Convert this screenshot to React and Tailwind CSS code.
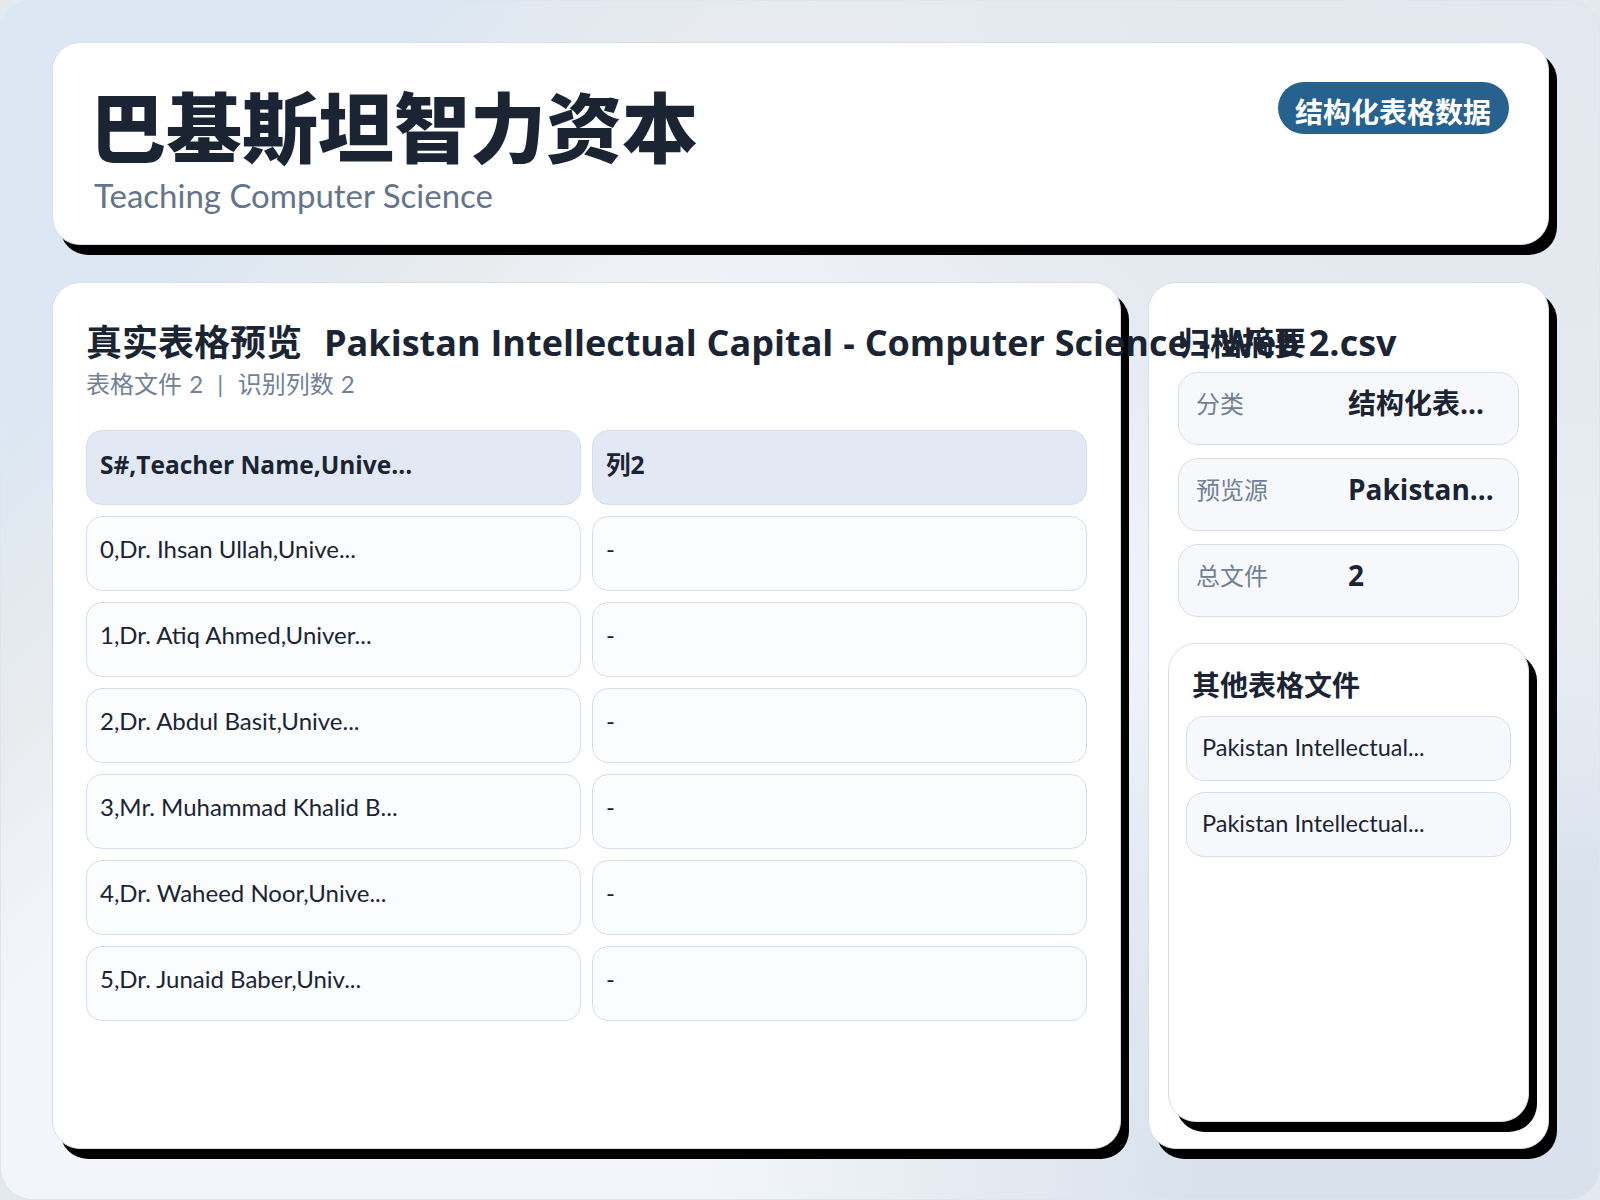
const ROWS = [
  '0,Dr. Ihsan Ullah,Unive...',
  '1,Dr. Atiq Ahmed,Univer...',
  '2,Dr. Abdul Basit,Unive...',
  '3,Mr. Muhammad Khalid B...',
  '4,Dr. Waheed Noor,Unive...',
  '5,Dr. Junaid Baber,Univ...',
]

const SUMMARY = [
  { label: '分类', value: '结构化表...' },
  { label: '预览源', value: 'Pakistan...' },
  { label: '总文件', value: '2' },
]

const BOLD = "font-['Open_Sans','Noto_Sans_CJK_SC',sans-serif] font-bold"

function Cell({ children, head }) {
  return (
    <div
      className={`h-[75px] rounded-[16px] border border-[#d6deea] pl-[13px] overflow-hidden whitespace-nowrap ${
        head ? `pt-[17px] bg-[#e2e9f4] text-[24.5px] leading-[34px] ${BOLD}` : 'pt-[15px] bg-[#fafcfe] text-[24px] leading-[33px]'
      }`}
    >
      {children}
    </div>
  )
}

export default function App() {
  return (
    <div className="w-[1600px] h-[1200px] bg-[#e4e9f0] text-[#1a2433] overflow-hidden font-['Lato','Noto_Sans_CJK_SC',sans-serif]">
      <div className="w-full h-full rounded-[32px] border border-[#dfe5ee] pt-[41px] pb-[50px] pl-[51px] pr-[50px] flex flex-col gap-[37px] bg-[radial-gradient(ellipse_900px_700px_at_100%_100%,#d9e2ec_0%,#d9e2ec_45%,rgba(217,226,236,0)_100%),radial-gradient(ellipse_1100px_750px_at_100%_0%,#e3e8f0_0%,#e5e9f0_55%,rgba(229,233,240,0)_100%),linear-gradient(135deg,#dbe7f3_0%,#dbe7f3_15%,#e8ebee_26%,#f3f5fa_36%,#f3f5fa_100%)]">
        {/* 顶部标题 */}
        <header className="h-[203px] shrink-0 rounded-[28px] border border-[#d6deea] bg-white shadow-[8px_10px_0_#000] pl-[41px] pr-[39px] pt-[36px] flex justify-between items-start">
          <div>
            <h1 className="ml-[-4px] text-[76px] leading-[90px] font-black font-['Noto_Sans_CJK_SC',sans-serif]">巴基斯坦智力资本</h1>
            <p className="mt-[3px] text-[33px] leading-[46px] text-[#64748b]">Teaching Computer Science</p>
          </div>
          <span className={`mt-[3px] h-[52px] rounded-[26px] bg-[#27628f] pl-[17px] pr-[18px] text-[28px] leading-[60px] text-white whitespace-nowrap ${BOLD}`}>
            结构化表格数据
          </span>
        </header>

        <div className="flex-1 min-h-0 flex gap-[27px]">
          {/* 表格预览：标题溢出到右栏之上 */}
          <section className="relative z-10 w-[1069px] shrink-0 rounded-[28px] border border-[#d6deea] bg-white shadow-[8px_10px_0_#000] pl-[33px] pr-[33px] pt-[37px]">
            <h2 className={`text-[36px] leading-[46px] whitespace-nowrap ${BOLD}`}>
              真实表格预览<span className="ml-[22px] [word-spacing:0.5px]">Pakistan Intellectual Capital - Computer Science - Web 2.csv</span>
            </h2>
            <p className="text-[24px] leading-[36px] text-[#718096] whitespace-pre [word-spacing:1px]">表格文件 2  |  识别列数 2</p>
            <div className="mt-[28px] grid grid-cols-2 gap-x-[11px] gap-y-[11px]">
              <Cell head>S#,Teacher Name,Unive...</Cell>
              <Cell head>列2</Cell>
              {ROWS.map((r) => [<Cell key={r}>{r}</Cell>, <Cell key={r + '-'}>-</Cell>])}
            </div>
          </section>

          {/* 归档摘要 */}
          <aside className="w-[401px] shrink-0 rounded-[28px] border border-[#d6deea] bg-white shadow-[8px_10px_0_#000] px-[29px] pt-[37px] flex flex-col">
            <h2 className={`text-[32px] leading-[46px] whitespace-nowrap ${BOLD}`}>归档摘要</h2>
            <div className="mt-[6px] flex flex-col gap-[13.5px]">
              {SUMMARY.map(({ label, value }) => (
                <div key={label} className="h-[72.5px] rounded-[20px] border border-[#d6deea] bg-[#f6f8fc] pl-[17px] pt-[14px] flex">
                  <span className="w-[152px] shrink-0 mt-[-2px] text-[24px] leading-[38px] text-[#718096]">{label}</span>
                  <span className={`text-[28px] leading-[32px] whitespace-nowrap ${BOLD}`}>{value}</span>
                </div>
              ))}
            </div>
            <div className="mt-[26px] mx-[-10px] flex-1 mb-[26px] rounded-[28px] border border-[#d6deea] bg-white shadow-[8px_10px_0_#000] px-[17px] pt-[21px]">
              <h3 className={`text-[28px] leading-[40px] pl-[6px] ${BOLD}`}>其他表格文件</h3>
              <div className="mt-[11px] flex flex-col gap-[11.5px]">
                <div className="h-[65px] rounded-[18px] border border-[#d6deea] bg-[#f6f8fc] pl-[15px] pt-[14px] text-[23.5px] leading-[33px]">Pakistan Intellectual...</div>
                <div className="h-[65px] rounded-[18px] border border-[#d6deea] bg-[#f6f8fc] pl-[15px] pt-[14px] text-[23.5px] leading-[33px]">Pakistan Intellectual...</div>
              </div>
            </div>
          </aside>
        </div>
      </div>
    </div>
  )
}
